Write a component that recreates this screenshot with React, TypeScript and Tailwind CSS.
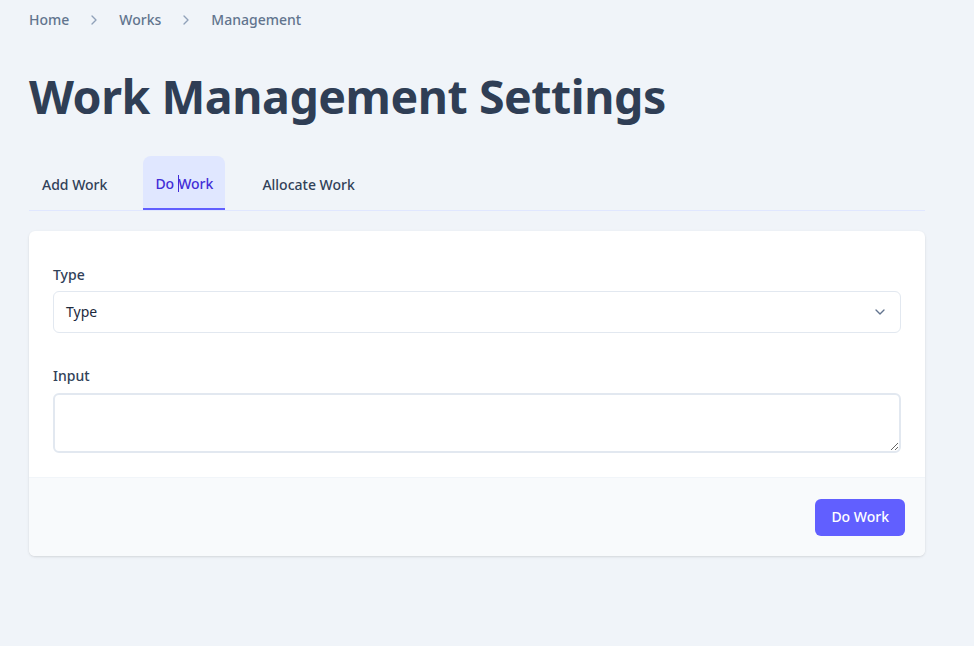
import { ChevronRight, ChevronDown } from "lucide-react";

export default function App() {
  return (
    <div
      className="min-h-screen bg-[#f0f4f9] text-slate-700"
      style={{ fontFamily: '"Noto Sans", "Open Sans", sans-serif' }}
    >
      <div className="w-[896px] ml-[29px] pt-[9px]">
        {/* Breadcrumb */}
        <nav className="flex items-center text-sm font-medium text-slate-500 h-[22px]">
          <span>Home</span>
          <ChevronRight size={16} strokeWidth={2} className="mx-[17px] text-slate-400" />
          <span>Works</span>
          <ChevronRight size={16} strokeWidth={2} className="mx-[17px] text-slate-400" />
          <span>Management</span>
        </nav>

        <h1 className="mt-[37px] text-[46.5px] leading-[56px] font-bold text-[#2f3e55] tracking-[-0.01em]">
          Work Management Settings
        </h1>

        {/* Tabs */}
        <div className="mt-[32px] flex border-b border-[#e0e7ff] text-sm font-medium">
          <button className="px-[13px] pt-[3px] h-[54px] text-slate-700">Add Work</button>
          <button className="ml-[23px] px-[12px] pt-[3px] h-[54px] bg-indigo-100 text-indigo-700 rounded-t-lg border-b-2 border-indigo-500 -mb-px flex items-center">
            Do <span className="inline-block w-px h-[17px] bg-indigo-700 ml-[4px] mr-[-1px]" />Work
          </button>
          <button className="ml-[24px] px-[13px] pt-[3px] h-[54px] text-slate-700">Allocate Work</button>
        </div>

        {/* Card */}
        <div className="mt-[20px] bg-white rounded-md shadow-sm overflow-hidden">
          <div className="p-6 pt-[34px] pb-[24px]">
            <label className="block text-sm font-medium text-slate-700 leading-5">Type</label>
            <div className="mt-[6px] relative h-[42px] border border-slate-200 rounded-md flex items-center px-3 text-sm text-slate-800">
              Type
              <ChevronDown size={16} strokeWidth={2} className="absolute right-[12px] text-slate-500" />
            </div>

            <label className="mt-[33px] block text-sm font-medium text-slate-700 leading-5">Input</label>
            <textarea className="mt-[7px] block w-full h-[60px] border-2 border-slate-200 rounded-md" />
          </div>
          <div className="bg-slate-50 border-t border-slate-100 h-[79px] flex items-center justify-end px-5">
            <button className="h-[37px] px-4 bg-indigo-500 text-white text-sm font-medium rounded-md">
              Do Work
            </button>
          </div>
        </div>
      </div>
    </div>
  );
}
